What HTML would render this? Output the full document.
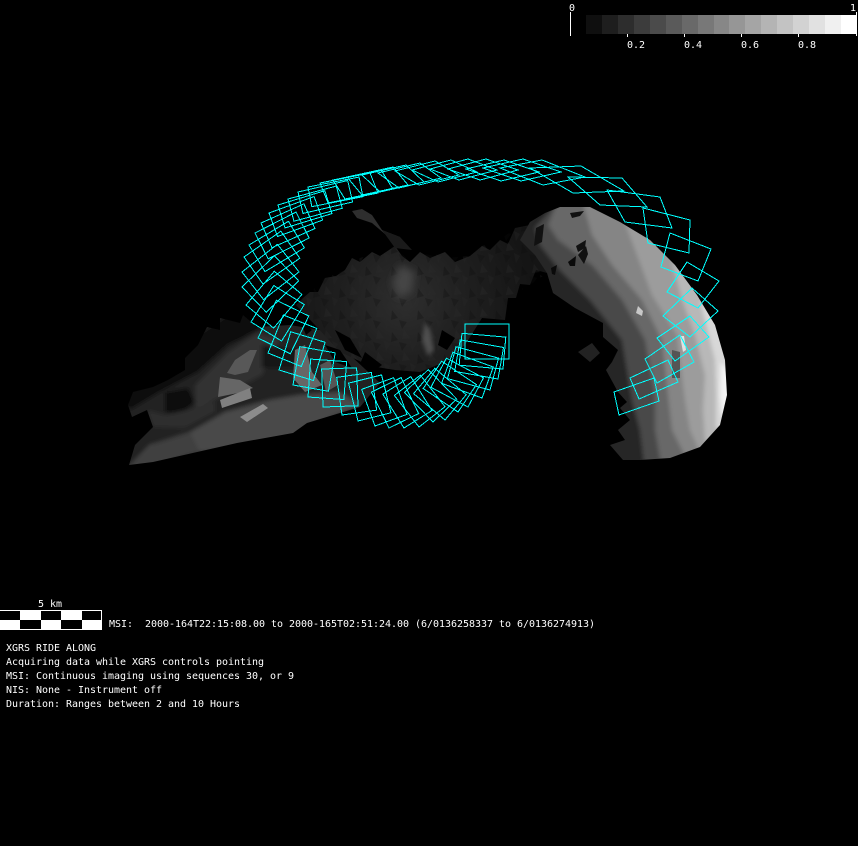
<!DOCTYPE html>
<html><head><meta charset="utf-8"><style>
html,body{margin:0;padding:0;background:#000;width:858px;height:846px;overflow:hidden}
svg{display:block;position:absolute;left:0;top:0}
text{font-family:"DejaVu Sans Mono","Liberation Mono",monospace;font-size:10px;letter-spacing:-.02px;fill:#fff;white-space:pre}
</style></head><body>
<svg width="858" height="846" viewBox="0 0 858 846" xmlns="http://www.w3.org/2000/svg">
<defs>
<rect id="q" x="0" y="0" width="1" height="1" fill="none" stroke="#0ff" stroke-width="1" vector-effect="non-scaling-stroke" shape-rendering="crispEdges"/>
<pattern id="tex" width="26" height="22" patternUnits="userSpaceOnUse">
<polygon points="2,2 8,10 1,12" fill="#0c0c0c"/>
<polygon points="14,0 20,8 12,9" fill="#2c2c2c"/>
<polygon points="9,12 17,14 12,21" fill="#0e0e0e"/>
<polygon points="20,11 26,14 22,21" fill="#282828"/>
</pattern>
<radialGradient id="mid" gradientUnits="userSpaceOnUse" cx="405" cy="300" r="125">
<stop offset="0" stop-color="#2e2e2e"/><stop offset=".5" stop-color="#1f1f1f"/><stop offset="1" stop-color="#151515"/>
</radialGradient>
<filter id="b2" x="-10%" y="-10%" width="120%" height="120%"><feGaussianBlur stdDeviation="2"/></filter>
<filter id="b4" x="-30%" y="-30%" width="160%" height="160%"><feGaussianBlur stdDeviation="4"/></filter>
<clipPath id="cres"><polygon points="520,240 530,222 545,213 560,207 590,207 620,222 650,240 675,265 697,295 715,325 725,360 727,395 720,425 700,447 670,458 640,460 623,460 610,445 625,440 618,430 630,420 620,408 627,402 618,392 606,370 612,362 618,350 603,337 603,323 575,308 553,293 547,273 535,255"/></clipPath>
<clipPath id="fanc"><polygon points="129,465 135,445 153,427 147,410 132,417 128,405 133,392 153,387 168,380 185,370 185,358 198,345 207,327 220,330 220,318 240,323 243,315 257,327 290,325 320,330 350,355 380,383 360,407 330,416 307,423 293,433 237,443 153,462"/></clipPath>
</defs>
<rect width="858" height="846" fill="#000"/>

<!-- left fan -->
<g clip-path="url(#fanc)">
<g filter="url(#b2)">
<rect x="120" y="300" width="270" height="170" fill="#242424"/>
<polygon fill="#101010" points="120,400 133,385 168,372 198,335 243,305 265,327 228,345 198,372 160,392 130,410"/>
<polygon fill="#333" points="195,385 228,352 258,332 280,340 262,375 225,395 195,410"/>
<polygon fill="#0e0e0e" points="165,392 188,388 195,402 180,415 165,412"/>
<polygon fill="#2e2e2e" points="147,410 165,415 195,408 215,402 215,412 185,428 153,427"/>
<polygon fill="#484848" points="190,432 225,412 270,400 300,395 340,392 360,405 307,428 293,438 237,448 200,452 165,462 153,466 125,470 150,445"/>
<polygon fill="#404040" points="125,470 153,445 190,432 200,452 153,464"/>
<polygon fill="#202020" points="258,378 340,362 350,390 270,395"/>
<polygon fill="#181818" points="262,345 300,350 310,368 262,368"/>
</g>
<polygon fill="#585858" points="257,350 248,372 235,375 227,373 235,360 250,350"/>
<polygon fill="#666" points="220,377 240,380 253,388 238,393 218,397"/>
<polygon fill="#808080" points="220,400 250,388 252,398 222,408"/>
<polygon fill="#8c8c8c" points="240,417 263,404 268,408 247,422"/>
<polygon fill="#666" points="295,350 305,345 312,372 322,385 305,392 293,378"/>
<polygon fill="#555" points="320,365 330,360 338,385 326,392"/>
</g>

<!-- middle blob -->
<polygon fill="url(#mid)" points="296,305 303,298 310,292 318,292 325,278 336,276 345,270 352,258 360,262 372,252 380,256 395,246 402,256 410,262 420,252 430,258 445,252 455,262 470,256 482,246 490,250 500,240 508,244 515,228 530,225 547,213 547,273 536,270 530,285 520,284 516,298 508,298 505,320 482,318 465,345 445,362 420,372 395,370 370,366 340,352 315,325"/>
<polygon fill="url(#tex)" opacity=".3" points="296,305 310,292 325,278 345,270 360,258 380,252 395,246 410,262 430,252 445,258 470,256 482,246 500,240 515,228 530,225 547,213 547,273 530,285 508,298 505,320 482,318 465,345 445,362 420,372 395,370 370,366 340,352 315,325"/>
<polygon fill="#444" filter="url(#b4)" points="400,265 415,272 412,292 398,298 392,282"/>
<polygon fill="#505050" filter="url(#b2)" points="425,322 430,330 434,350 428,356 422,340"/>
<polygon fill="#000" points="335,330 350,338 362,358 345,350"/>
<polygon fill="#000" points="325,345 340,350 352,368 335,362"/>
<polygon fill="#000" points="365,352 382,365 372,372 360,364"/>
<polygon fill="#000" points="300,320 312,330 306,335"/>
<polygon fill="#000" points="442,330 455,338 447,350 438,345"/>
<polygon fill="#2e2e2e" points="352,211 362,209 372,215 382,230 400,237 392,240 372,223 357,218"/>
<polygon fill="#1a1a1a" points="382,230 400,237 412,250 395,248"/>

<!-- right crescent -->
<g clip-path="url(#cres)">
<g filter="url(#b2)">
<rect x="500" y="190" width="240" height="280" fill="#282828"/>
<polygon fill="#484848" points="535,228 560,200 590,200 630,210 740,300 740,470 645,470 640,430 632,400 628,375 622,340 590,300 560,270 540,245"/>
<polygon fill="#686868" points="548,225 558,200 590,200 630,210 740,300 740,470 662,470 655,430 655,395 645,340 622,300 592,265 558,240"/>
<polygon fill="#858585" points="582,200 630,210 740,300 740,470 692,470 672,430 668,395 662,340 642,300 612,265 592,235"/>
<polygon fill="#9c9c9c" points="622,215 660,230 740,300 740,470 708,470 690,430 685,400 677,335 652,295 637,255"/>
<polygon fill="#b8b8b8" points="672,262 700,280 740,330 740,470 720,460 705,440 703,410 705,375 695,335 682,300"/>
<polygon fill="#d8d8d8" points="700,300 730,330 740,400 730,430 716,428 716,395 715,360 705,320"/>
<polygon fill="#f4f4f4" points="721,362 732,375 732,415 722,415 720,395"/>
</g>
<polygon fill="#111" points="570,213 584,211 580,216 572,218"/>
<polygon fill="#111" points="576,246 586,240 585,248 578,252"/>
<polygon fill="#111" points="578,255 586,246 588,254 584,264"/>
<polygon fill="#0a0a0a" points="568,262 576,256 575,266 570,266"/>
<polygon fill="#0a0a0a" points="551,268 557,265 555,275 552,274"/>
<polygon fill="#111" points="536,228 544,224 542,242 534,246"/>
<polygon fill="#e0e0e0" points="680,336 684,336 686,350 683,352"/>
<polygon fill="#c8c8c8" points="638,306 643,311 642,316 636,313"/>
<polygon fill="#555" points="672,350 680,352 680,378 672,378"/>
</g>
<polygon fill="#222" points="578,352 592,343 600,353 590,362"/>

<!-- footprints -->
<g>
<use href="#q" transform="translate(509 359) rotate(-180) scale(44 35)"/>
<use href="#q" transform="translate(503 369) rotate(-175) scale(44 32)"/>
<use href="#q" transform="translate(498 379) rotate(-170) scale(44 32)"/>
<use href="#q" transform="translate(490 390) rotate(-165) scale(44 33)"/>
<use href="#q" transform="translate(482 398) rotate(-160) scale(43 33)"/>
<use href="#q" transform="translate(468 407) rotate(-152) scale(42 33)"/>
<use href="#q" transform="translate(458 412) rotate(-146) scale(42 33)"/>
<use href="#q" transform="translate(445 420) rotate(-140) scale(41 33)"/>
<use href="#q" transform="translate(433 422) rotate(-134) scale(41 33)"/>
<use href="#q" transform="translate(419 427) rotate(-128) scale(40 33)"/>
<use href="#q" transform="translate(404 428) rotate(-122) scale(40 33)"/>
<use href="#q" transform="translate(389 428) rotate(-116) scale(40 33)"/>
<use href="#q" transform="translate(375 426) rotate(-110) scale(39 34)"/>
<use href="#q" transform="translate(358 421) rotate(-104) scale(39 34)"/>
<use href="#q" transform="translate(342 415) rotate(-98) scale(38 35)"/>
<use href="#q" transform="translate(323 407) rotate(-92) scale(38 35)"/>
<use href="#q" transform="translate(308 397) rotate(-86) scale(38 36)"/>
<use href="#q" transform="translate(293 385) rotate(-80) scale(39 36)"/>
<use href="#q" transform="translate(279 370) rotate(-73) scale(40 36)"/>
<use href="#q" transform="translate(268 353) rotate(-68) scale(41 36)"/>
<use href="#q" transform="translate(258 338) rotate(-64) scale(42 36)"/>
<use href="#q" transform="translate(251 322) rotate(-58) scale(43 36)"/>
<use href="#q" transform="translate(246 305) rotate(-50) scale(44 36)"/>
<use href="#q" transform="translate(242 287) rotate(-44) scale(45 35)"/>
<use href="#q" transform="translate(242 272) rotate(-38) scale(45 35)"/>
<use href="#q" transform="translate(244 257) rotate(-35) scale(45 33)"/>
<use href="#q" transform="translate(249 245) rotate(-31) scale(46 31)"/>
<use href="#q" transform="translate(255 233) rotate(-27) scale(46 29)"/>
<use href="#q" transform="translate(261 223) rotate(-24) scale(47 27)"/>
<use href="#q" transform="translate(269 213) rotate(-20) scale(48 25)"/>
<use href="#q" transform="translate(278 205) rotate(-17) scale(49 24)"/>
<use href="#q" transform="translate(288 199) rotate(-15) scale(50 23)"/>
<use href="#q" transform="translate(298 192) rotate(-13) scale(51 22)"/>
<use href="#q" transform="translate(308 187) rotate(-11) scale(52 20)"/>
<use href="#q" transform="matrix(50 -10 8 20 320 183)"/>
<use href="#q" transform="matrix(48 -10 12 19 333 180)"/>
<use href="#q" transform="matrix(46 -10 15 18 347 177)"/>
<use href="#q" transform="matrix(44 -10 18 17 362 175)"/>
<use href="#q" transform="matrix(42 -10 21 15 378 173)"/>
<use href="#q" transform="matrix(40 -10 24 14 395 171)"/>
<use href="#q" transform="matrix(39 -10 26 12 412 170)"/>
<use href="#q" transform="matrix(38 -10 29 11 430 169)"/>
<use href="#q" transform="matrix(38 -10 32 11 448 169)"/>
<use href="#q" transform="matrix(38 -9 35 12 466 169)"/>
<use href="#q" transform="matrix(40 -9 38 13 483 168)"/>
<use href="#q" transform="matrix(42 -8 43 17 500 168)"/>
<use href="#q" transform="matrix(51 -2 43 25 530 168)"/>
</g>
<g fill="none" stroke="#0ff" stroke-width="1" shape-rendering="crispEdges">
<polygon points="568,177 622,178 647,207 600,205"/>
<polygon points="607,190 660,197 672,228 625,222"/>
<polygon points="643,208 690,220 689,253 648,243"/>
<polygon points="670,233 711,249 698,281 661,267"/>
<polygon points="687,262 719,281 698,308 667,292"/>
<polygon points="692,288 718,311 690,337 663,316"/>
<polygon points="690,316 709,337 675,361 657,338"/>
<polygon points="680,335 694,362 657,383 645,359"/>
<polygon points="668,360 678,382 639,399 630,378"/>
<polygon points="654,378 659,401 619,415 614,392"/>
</g>

<!-- colour bar -->
<g shape-rendering="crispEdges">
<rect x="586" y="15" width="16" height="19" fill="#0f0f0f"/>
<rect x="602" y="15" width="16" height="19" fill="#1e1e1e"/>
<rect x="618" y="15" width="16" height="19" fill="#2d2d2d"/>
<rect x="634" y="15" width="16" height="19" fill="#3c3c3c"/>
<rect x="650" y="15" width="16" height="19" fill="#4b4b4b"/>
<rect x="666" y="15" width="16" height="19" fill="#5a5a5a"/>
<rect x="682" y="15" width="16" height="19" fill="#696969"/>
<rect x="698" y="15" width="16" height="19" fill="#787878"/>
<rect x="714" y="15" width="15" height="19" fill="#878787"/>
<rect x="729" y="15" width="16" height="19" fill="#969696"/>
<rect x="745" y="15" width="16" height="19" fill="#a5a5a5"/>
<rect x="761" y="15" width="16" height="19" fill="#b4b4b4"/>
<rect x="777" y="15" width="16" height="19" fill="#c3c3c3"/>
<rect x="793" y="15" width="16" height="19" fill="#d2d2d2"/>
<rect x="809" y="15" width="16" height="19" fill="#e1e1e1"/>
<rect x="825" y="15" width="16" height="19" fill="#f0f0f0"/>
<rect x="841" y="15" width="16" height="19" fill="#fff"/>
<rect x="570" y="12" width="1" height="24" fill="#fff"/>
<rect x="856" y="12" width="1" height="24" fill="#fff"/>
<rect x="627" y="34" width="1" height="3" fill="#fff"/>
<rect x="684" y="34" width="1" height="3" fill="#fff"/>
<rect x="741" y="34" width="1" height="3" fill="#fff"/>
<rect x="798" y="34" width="1" height="3" fill="#fff"/>
</g>
<text x="569" y="11">0</text>
<text x="850" y="11">1</text>
<text x="627" y="48">0.2</text>
<text x="684" y="48">0.4</text>
<text x="741" y="48">0.6</text>
<text x="798" y="48">0.8</text>

<!-- scale bar -->
<g shape-rendering="crispEdges">
<rect x="0" y="610" width="102" height="20" fill="#fff"/>
<rect x="0" y="611" width="20" height="9" fill="#000"/>
<rect x="41" y="611" width="20" height="9" fill="#000"/>
<rect x="82" y="611" width="19" height="9" fill="#000"/>
<rect x="20" y="620" width="21" height="9" fill="#000"/>
<rect x="61" y="620" width="21" height="9" fill="#000"/>
</g>
<text x="38" y="607">5 km</text>
<text x="109" y="627">MSI:  2000-164T22:15:08.00 to 2000-165T02:51:24.00 (6/0136258337 to 6/0136274913)</text>
<text x="6" y="651">XGRS RIDE ALONG</text>
<text x="6" y="665">Acquiring data while XGRS controls pointing</text>
<text x="6" y="679">MSI: Continuous imaging using sequences 30, or 9</text>
<text x="6" y="693">NIS: None - Instrument off</text>
<text x="6" y="707">Duration: Ranges between 2 and 10 Hours</text>
</svg>
</body></html>
